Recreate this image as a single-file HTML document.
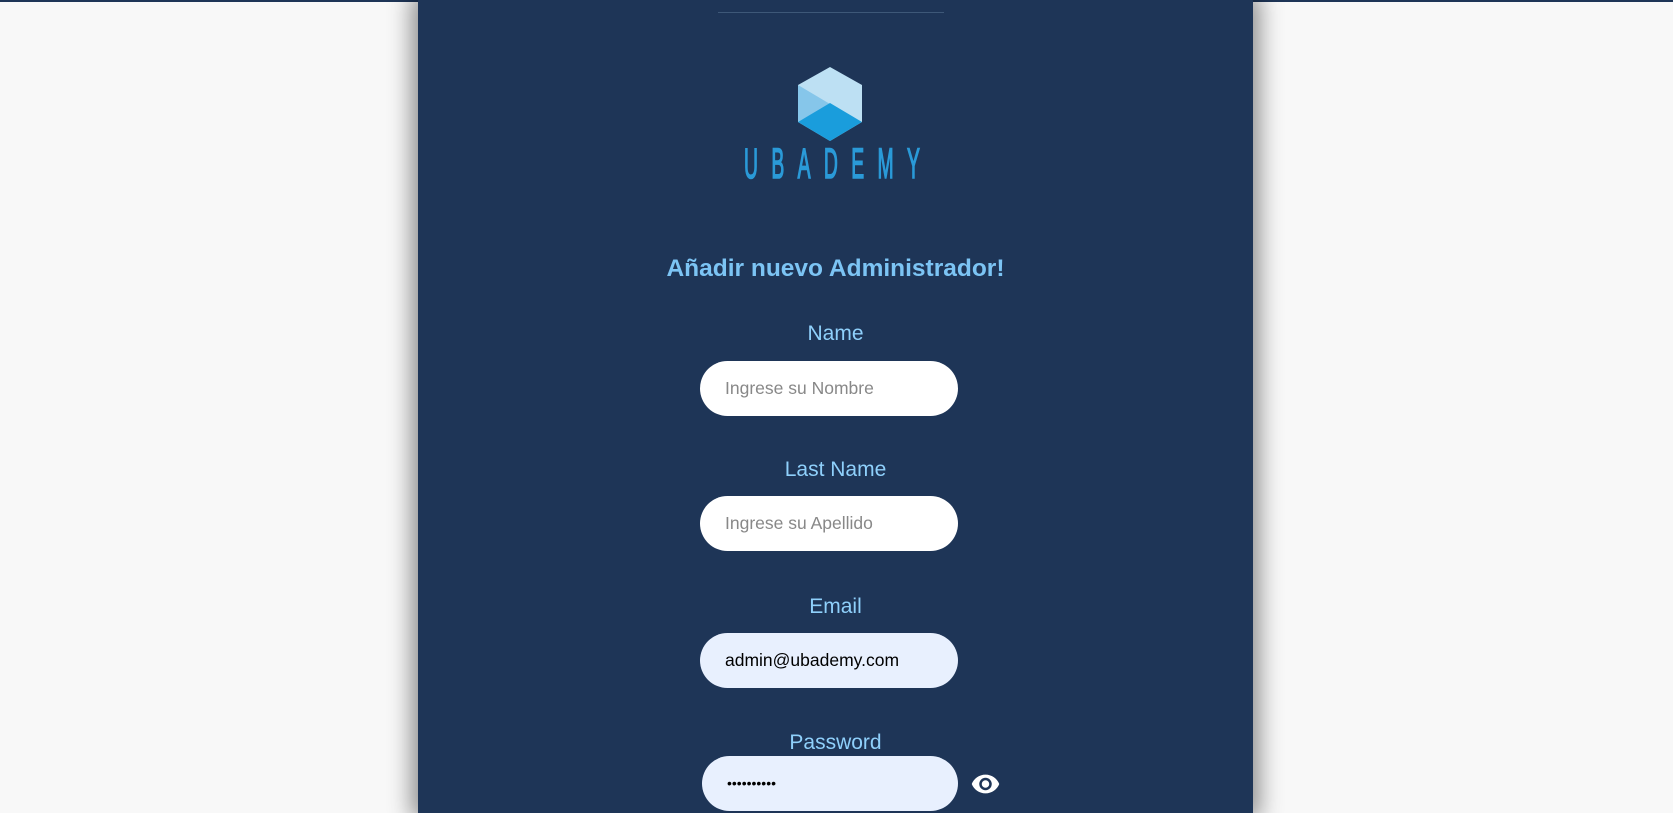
<!DOCTYPE html>
<html><head><meta charset="utf-8"><style>
html,body{margin:0;padding:0;width:1673px;height:813px;overflow:hidden;background:#f8f8f8;font-family:"Liberation Sans",sans-serif;}
.top{position:absolute;left:0;top:0;width:1673px;height:2px;background:#1e3557;}
.panel{position:absolute;left:418px;top:0;width:835px;height:813px;background:#1e3557;box-shadow:0 0 22px 6px rgba(0,0,0,0.45);}
.div{position:absolute;left:718px;top:12px;width:226px;height:1px;background:#3e5878;}
.logo{position:absolute;left:796px;top:66px;}
.brand{position:absolute;left:744px;top:145px;}
.title{position:absolute;left:418px;width:835px;top:255px;text-align:center;color:#7cc4f4;font-weight:bold;font-size:24.5px;}
.lbl{position:absolute;left:418px;width:835px;text-align:center;color:#8fd0fb;font-size:21px;}
.in{position:absolute;left:700px;width:258px;height:55px;border-radius:28px;background:#fff;box-sizing:border-box;padding-left:25px;line-height:55px;font-size:17.5px;color:#888;}
.f{background:#e8f0fe;color:#000;}
</style></head><body>
<div class="top"></div>
<div class="panel"></div>
<div class="div"></div>
<svg class="logo" width="68" height="76" viewBox="0 0 68 76">
<polygon points="34,1 66,19 66,56 34,75 2,56 2,19" fill="#bde0f3"/>
<polygon points="2,19 34,38 2,56" fill="#86c6ea"/>
<polygon points="2,56 34,37 66,56 34,75" fill="#1a9ddc"/>
</svg>
<svg class="brand" width="180" height="36" viewBox="0 0 180 36"><g transform="scale(0.45,1)"><text x="0" y="33" font-family="Liberation Sans Narrow, Liberation Sans, sans-serif" font-size="43" fill="#2a9ad8" stroke="#2a9ad8" stroke-width="1.6" textLength="391" lengthAdjust="spacing">UBADEMY</text></g></svg>
<div class="title">Añadir nuevo Administrador!</div>
<div class="lbl" style="top:322px">Name</div>
<div class="in" style="top:361px">Ingrese su Nombre</div>
<div class="lbl" style="top:458px">Last Name</div>
<div class="in" style="top:496px">Ingrese su Apellido</div>
<div class="lbl" style="top:595px">Email</div>
<div class="in f" style="top:633px">admin@ubademy.com</div>
<div class="lbl" style="top:731px">Password</div>
<div class="in f" style="top:756px;left:702px;width:256px;font-size:14px;">&#8226;&#8226;&#8226;&#8226;&#8226;&#8226;&#8226;&#8226;&#8226;&#8226;</div>
<svg style="position:absolute;left:969px;top:769px" width="33" height="30" viewBox="0 0 24 24"><path fill="#fff" d="M12 4.5C7 4.5 2.7 7.6 1 12c1.7 4.4 6 7.5 11 7.5s9.3-3.1 11-7.5c-1.7-4.4-6-7.5-11-7.5zM12 17a5 5 0 110-10 5 5 0 010 10zm0-8a3 3 0 100 6 3 3 0 000-6z"/></svg>
</body></html>
